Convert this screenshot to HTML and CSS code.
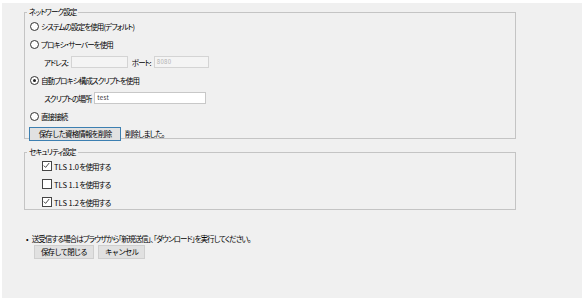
FILE: index.html
```html
<!DOCTYPE html>
<html lang="ja">
<head>
    <meta charset="UTF-8">
    <title>ネットワーク設定</title>
    <link rel="stylesheet" href="styles.css">
</head>
<body>

<div class="panel">
    <!-- ネットワーク設定 -->
    <fieldset class="group group-network">
        <legend>ネットワーク設定</legend>
        <div class="row"><span class="radio"></span>システムの設定を使用(デフォルト)</div>
        <div class="row"><span class="radio"></span>プロキシ・サーバーを使用</div>
        <div class="row sub">
            <span class="label">アドレス:</span>
            <span class="field field-disabled field-address"></span>
            <span class="label label-port">ポート:</span>
            <span class="field field-disabled field-port">8080</span>
        </div>
        <div class="row"><span class="radio checked"></span>自動プロキシ構成スクリプトを使用</div>
        <div class="row sub">
            <span class="label">スクリプトの場所</span>
            <span class="field field-script">test</span>
        </div>
        <div class="row"><span class="radio"></span>直接接続</div>
        <div class="row row-button">
            <button class="btn btn-focus">保存した資格情報を削除</button>
            <span class="status">削除しました。</span>
        </div>
    </fieldset>

    <!-- セキュリティ設定 -->
    <fieldset class="group group-security">
        <legend>セキュリティ設定</legend>
        <div class="row opt"><span class="check"><svg width="9" height="9" viewBox="0 0 9 9"><polyline points="1.8,4.6 3.6,6.4 7.2,2" fill="none" stroke="#333" stroke-width="0.9"/></svg></span><span class="latin">TLS 1.0</span>を使用する</div>
        <div class="row opt"><span class="check"></span><span class="latin">TLS 1.1</span>を使用する</div>
        <div class="row opt"><span class="check"><svg width="9" height="9" viewBox="0 0 9 9"><polyline points="1.8,4.6 3.6,6.4 7.2,2" fill="none" stroke="#333" stroke-width="0.9"/></svg></span><span class="latin">TLS 1.2</span>を使用する</div>
    </fieldset>

    <p class="note"><span class="bullet">•</span>送受信する場合はブラウザから「新規送信」、「ダウンロード」を実行してください。</p>

    <div class="actions">
        <button class="btn btn-save">保存して閉じる</button>
        <button class="btn btn-cancel">キャンセル</button>
    </div>
</div>

</body>
</html>
```

FILE: styles.css
```css
body {
    margin: 0;
    padding: 0;
    background-color: #fff;
    font-family: "Noto Sans CJK JP", "Noto Sans", sans-serif;
    font-size: 7.5px;
    letter-spacing: -0.9px;
    color: #000;
    font-feature-settings: "palt";
}

.panel {
    margin: 3px 0 0 2px;
    width: 580px;
    height: 295px;
    background-color: #f0f0f0;
    padding-top: 4px;
    box-sizing: border-box;
}

.group {
    margin: 0 0 0 22px;
    width: 492px;
    box-sizing: border-box;
    border: 1px solid #c4c4c4;
    padding: 0 0 0 5px;
}

.group legend {
    padding: 0 2px;
    margin-left: -3px;
    line-height: 10px;
}

.group-network {
    height: 132px;
}

.group-security {
    margin-top: 8px;
    height: 63px;
}

.row {
    display: flex;
    align-items: center;
    height: 18px;
    white-space: nowrap;
}

.row.sub {
    padding-left: 14px;
}

.row.opt {
    padding-left: 12px;
}

.latin {
    letter-spacing: 0;
    margin-right: 0.5px;
}

.radio {
    width: 7px;
    height: 7px;
    border: 1px solid #333;
    border-radius: 50%;
    background-color: #fff;
    margin-right: 2px;
    position: relative;
}

.radio.checked::after {
    content: "";
    position: absolute;
    left: 2px;
    top: 2px;
    width: 3px;
    height: 3px;
    border-radius: 50%;
    background-color: #222;
}

.check {
    width: 8px;
    height: 8px;
    border: 1px solid #444;
    background-color: #fff;
    margin-right: 2px;
    display: flex;
}

.check svg {
    margin: -1px 0 0 -1px;
}

.label {
    margin-right: 3px;
}

.label-port {
    margin-left: 4px;
}

.field {
    height: 10px;
    line-height: 10px;
    border: 1px solid #c8c8c8;
    box-sizing: content-box;
    padding: 0 2px;
    font-size: 6px;
    letter-spacing: 0.3px;
}

.field-disabled {
    background-color: #f4f4f4;
    border-color: #d4d4d4;
    color: #b0b0b0;
}

.field-address {
    width: 51px;
}

.field-port {
    width: 49px;
}

.field-script {
    width: 106px;
    background-color: #fff;
    color: #333;
}

.row-button {
    height: 17px;
}

.btn {
    font-family: inherit;
    font-size: 7.5px;
    letter-spacing: -0.9px;
    color: #000;
    background-color: #e1e1e1;
    border: 1px solid #adadad;
    padding: 0;
    height: 14px;
    line-height: 12px;
    white-space: nowrap;
}

.btn-focus {
    width: 92px;
    border-color: #3c7fb1;
    margin: 0 4px 0 -1px;
}

.note {
    margin: 23px 0 0 24px;
    line-height: 12px;
}

.bullet {
    margin-right: 4px;
}

.actions {
    display: flex;
    gap: 4px;
    margin: 0 0 0 32px;
}

.btn-save {
    width: 60px;
    border-color: #cfcfcf;
}

.btn-cancel {
    width: 47px;
    border-color: #cfcfcf;
}
```
